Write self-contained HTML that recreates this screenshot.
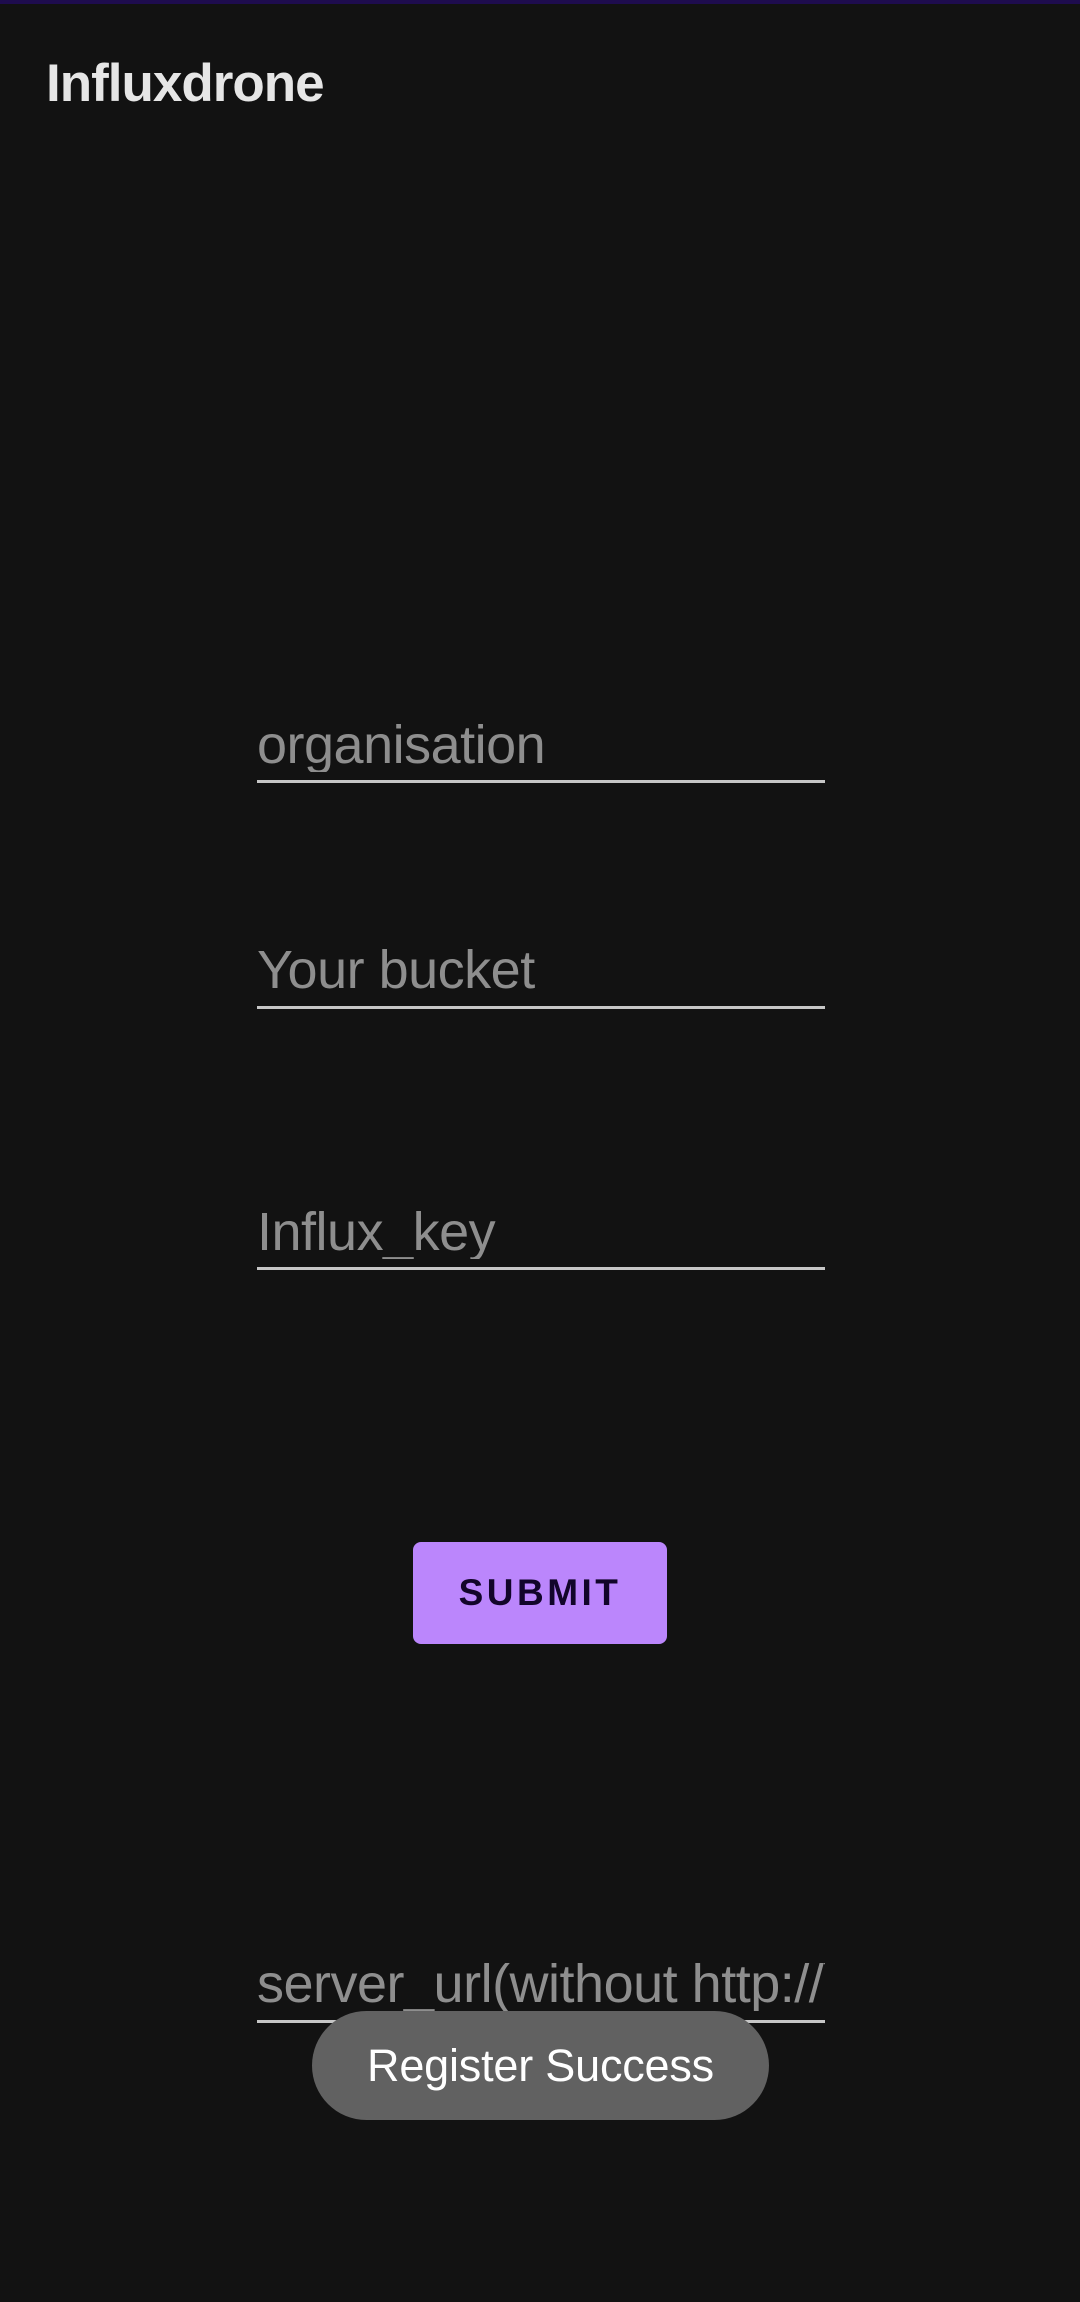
<!DOCTYPE html>
<html><head><meta charset="utf-8">
<style>
html,body{margin:0;padding:0;}
body{width:1080px;height:2302px;background:#121212;position:relative;overflow:hidden;font-family:"Liberation Sans",sans-serif;}
.top{position:absolute;left:0;top:0;width:1080px;height:4px;background:#1e0c4e;}
.title{position:absolute;left:46px;top:57px;font-size:53px;line-height:1;font-weight:bold;color:#e6e6e6;letter-spacing:-1px;}
.f{position:absolute;left:257px;width:568px;font-size:54px;line-height:1;color:#8e8e8e;white-space:nowrap;overflow:hidden;letter-spacing:-0.5px;}
.ln{position:absolute;left:257px;width:568px;height:3px;background:#c6c6c6;}
.btn{position:absolute;left:413px;top:1542px;width:254px;height:102px;background:#bb86fc;border-radius:8px;display:flex;align-items:center;justify-content:center;font-size:37px;font-weight:bold;letter-spacing:3.5px;color:#12052a;}
.toast{position:absolute;left:312px;top:2011px;width:457px;height:109px;border-radius:55px;background:#616161;display:flex;align-items:center;justify-content:center;font-size:45px;color:#fff;letter-spacing:-0.2px;}
</style></head><body>
<div class="top"></div>
<div class="title">Influxdrone</div>
<div class="f" style="top:718px">organisation</div>
<div class="ln" style="top:780px"></div>
<div class="f" style="top:943px">Your bucket</div>
<div class="ln" style="top:1006px"></div>
<div class="f" style="top:1205px">Influx_key</div>
<div class="ln" style="top:1267px"></div>
<div class="btn">SUBMIT</div>
<div class="f" style="top:1957px">server_url(without http://)</div>
<div class="ln" style="top:2020px"></div>
<div class="toast">Register Success</div>
</body></html>
